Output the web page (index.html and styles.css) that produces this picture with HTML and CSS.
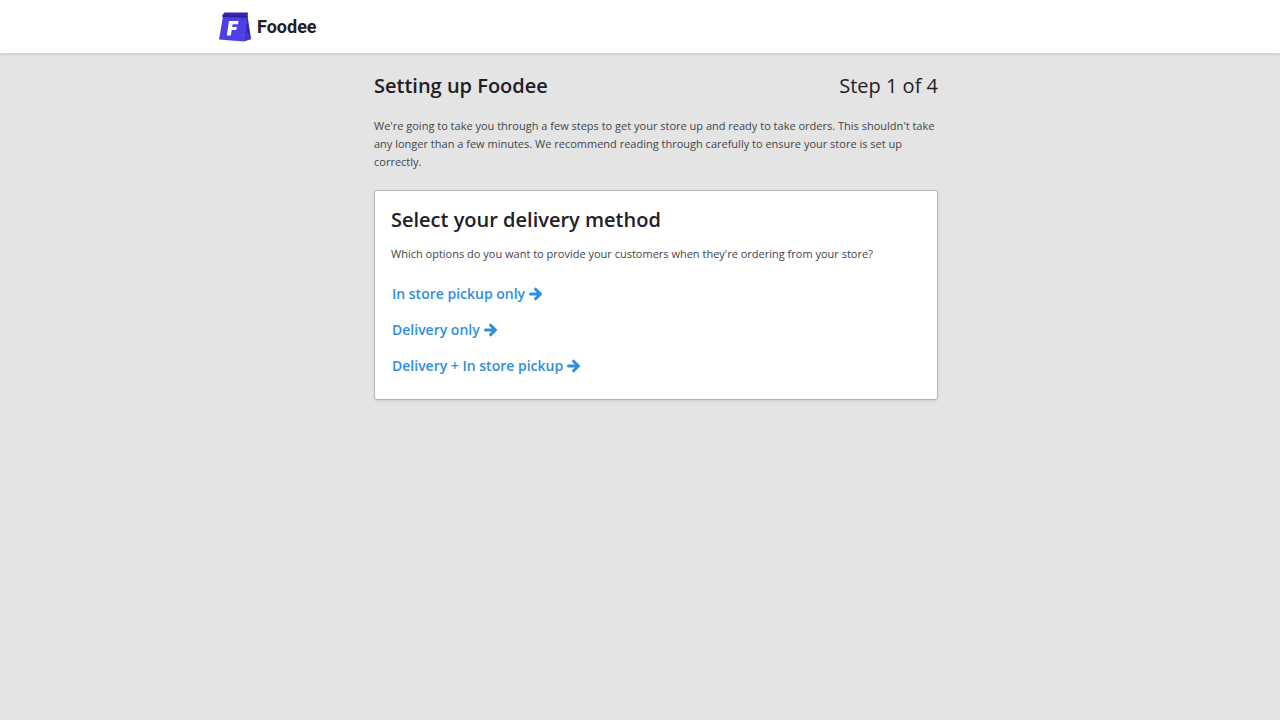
FILE: index.html
```html
<!DOCTYPE html>
<html lang="en">
<head>
<meta charset="utf-8">
<meta name="viewport" content="width=device-width, initial-scale=1">
<title>Setting up Foodee</title>
<link rel="stylesheet" href="styles.css">
</head>
<body>
<svg class="sprite" aria-hidden="true">
  <symbol id="arrow" viewBox="0 0 13 14">
    <path d="M1.500 7H10.500M6.600 2.200 11.300 7l-4.700 4.800" fill="none" stroke="currentColor" stroke-width="3" stroke-linecap="round" stroke-linejoin="miter"/>
  </symbol>
</svg>
<header class="topbar">
  <div class="topbar-inner">
    <a class="brand" href="#">
      <svg class="brand-mark" viewBox="0 0 34 32" aria-hidden="true">
        <path d="M6.500 1.500H30L29.500 7.500 4.500 6.500V4Z" fill="#3526b5"/>
        <path d="M5 5.500 29.500 6.500 25.500 30.500 1 28.500Z" fill="#4c41e4"/>
        <path d="M4.500 4 6.500 4.500 29.500 5V6.500L5 6Z" fill="#2b1c98"/>
        <path d="M29.500 5 33 28 25.500 30.500Z" fill="#3526b5"/>
        <path d="M28.500 19 33 28 25.500 30.500Z" fill="#4337cf"/>
        <path d="M11 10H20.500L20 13.200H14.600L14.200 16H18.800L18.400 19H13.700L12.900 24.500H8.800Z" fill="#fff"/>
      </svg>
      <span class="brand-name">Foodee</span>
    </a>
  </div>
</header>
<main class="setup">
  <div class="setup-head">
    <h1 class="title">Setting up Foodee</h1>
    <span class="step">Step 1 of 4</span>
  </div>
  <p class="text">We're going to take you through a few steps to get your store up and ready to take orders. This shouldn't take any longer than a few minutes. We recommend reading through carefully to ensure your store is set up correctly.</p>
  <section class="card">
    <h2 class="title">Select your delivery method</h2>
    <p class="text">Which options do you want to provide your customers when they're ordering from your store?</p>
    <div class="options">
      <button class="option" type="button">In store pickup only <svg class="arrow" aria-hidden="true"><use href="#arrow"/></svg></button>
      <button class="option" type="button">Delivery only <svg class="arrow" aria-hidden="true"><use href="#arrow"/></svg></button>
      <button class="option" type="button">Delivery + In store pickup <svg class="arrow" aria-hidden="true"><use href="#arrow"/></svg></button>
    </div>
  </section>
</main>
</body>
</html>
```
FILE: styles.css
```css
* { box-sizing: border-box; }
body {
  margin: 0;
  min-height: 100vh;
  background: #e4e4e4;
  color: #1e2025;
  font-family: "Segoe UI", "Open Sans", "Noto Sans", sans-serif;
}
.sprite { position: absolute; width: 0; height: 0; }
.topbar {
  padding: 11px 16px 10px 48px;
  background: #fff;
  box-shadow: 0 1px 3px rgba(0, 0, 0, 0.15);
}
.topbar-inner { max-width: 876px; margin: 0 auto; }
.brand {
  display: inline-flex;
  align-items: center;
  gap: 5px;
  color: #1e2025;
  text-decoration: none;
  vertical-align: top;
}
.brand-mark { width: 34px; height: 32px; }
.brand-name {
  font-family: Roboto, sans-serif;
  font-size: 18px;
  font-weight: 700;
  line-height: 32px;
}
.setup {
  box-sizing: content-box;
  max-width: 564px;
  margin: 0 auto;
  padding: 17px 16px 32px 48px;
}
.setup-head {
  display: flex;
  align-items: center;
  justify-content: space-between;
  margin-bottom: 15px;
}
.title { margin: 0; font-size: 20px; font-weight: 600; line-height: 32px; }
.step { font-size: 20px; line-height: 32px; }
.text { margin: 0; color: #434449; font-size: 11px; line-height: 18px; }
.card {
  margin-top: 19px;
  padding: 13px 16px 21px;
  background: #fff;
  border: 1px solid #b4b4b4;
  border-radius: 3px;
  box-shadow: 0 1px 3px rgba(0, 0, 0, 0.1);
}
.card .text { margin-top: 9px; }
.options {
  display: flex;
  flex-direction: column;
  align-items: flex-start;
  gap: 12px;
  margin-top: 19px;
}
.option {
  display: inline-flex;
  align-items: center;
  gap: 4px;
  padding: 0 1px;
  border: 0;
  background: none;
  color: #2f8ede;
  font: 600 14px/24px "Segoe UI", "Open Sans", "Noto Sans", sans-serif;
  cursor: pointer;
}
.option:hover { text-decoration: underline; }
.arrow { width: 13px; height: 14px; }
```
